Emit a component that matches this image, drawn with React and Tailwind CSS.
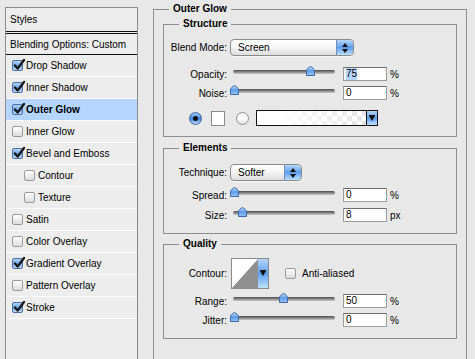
const layers = [
  { label: "Drop Shadow", on: true },
  { label: "Inner Shadow", on: true },
  { label: "Outer Glow", on: true, active: true },
  { label: "Inner Glow" },
  { label: "Bevel and Emboss", on: true },
  { label: "Contour", sub: true },
  { label: "Texture", sub: true },
  { label: "Satin" },
  { label: "Color Overlay" },
  { label: "Gradient Overlay", on: true },
  { label: "Pattern Overlay" },
  { label: "Stroke", on: true },
];

function Checkbox({ on }) {
  if (!on) {
    return (
      <div className="w-[11px] h-[11px] shrink-0 rounded-[2px] border border-[#9a9a9a] bg-gradient-to-b from-[#ffffff] to-[#dcdcdc]" />
    );
  }
  return (
    <div className="relative w-[11px] h-[11px] shrink-0 rounded-[2px] border border-[#4a6fa3] bg-gradient-to-b from-[#b4d4f7] via-[#6aa6ec] to-[#bcdcfb]">
      <svg className="absolute -left-[1px] -top-[3px]" width="14" height="14" viewBox="0 0 14 14">
        <path d="M3 7.5 L5.6 10.6 L12 2" stroke="#161616" strokeWidth="2.3" fill="none" strokeLinecap="round" strokeLinejoin="round" />
      </svg>
    </div>
  );
}

function Radio({ on }) {
  if (on) {
    return (
      <div className="w-[13px] h-[13px] shrink-0 rounded-full border border-[#3f679e] bg-gradient-to-b from-[#9cc6f4] via-[#3f87de] to-[#b2d7fb] flex items-center justify-center">
        <div className="w-[5px] h-[5px] rounded-full bg-[#111]" />
      </div>
    );
  }
  return (
    <div className="w-[13px] h-[13px] shrink-0 rounded-full border border-[#8f8f8f] bg-gradient-to-b from-[#f4f4f4] via-[#ffffff] to-[#dedede]" />
  );
}

function Stepper() {
  return (
    <div className="w-[17px] h-full ml-auto shrink-0 rounded-r-[4px] border-l border-[#6f8fb8] bg-gradient-to-b from-[#b7d6f8] via-[#5c9ded] to-[#bfe0fc] flex flex-col items-center justify-center gap-[2px]">
      <svg width="6" height="4" viewBox="0 0 6 4"><path d="M3 0 L6 4 H0 Z" fill="#111" /></svg>
      <svg width="6" height="4" viewBox="0 0 6 4"><path d="M0 0 H6 L3 4 Z" fill="#111" /></svg>
    </div>
  );
}

function Select({ value, width }) {
  return (
    <div className={`${width} h-full flex items-stretch rounded-[4px] border border-[#8a8a8a] bg-gradient-to-b from-[#ffffff] via-[#f4f4f4] to-[#dddddd] shadow-[0_1px_0_#f6f6f6]`}>
      <span className="pl-[7px] flex items-center">{value}</span>
      <Stepper />
    </div>
  );
}

function DropArrow() {
  return (
    <div className="w-[10px] h-full shrink-0 bg-gradient-to-b from-[#b7d6f8] via-[#5c9ded] to-[#bfe0fc] flex items-center justify-center">
      <svg width="6" height="7" viewBox="0 0 6 7"><path d="M0 0 H6 V1 L3 6 L0 1 Z" fill="#111" /></svg>
    </div>
  );
}

function Slider({ pos }) {
  return (
    <div className="relative w-[108px] h-full px-[3px] pt-[3px] shrink-0">
      <div className="h-[4px] rounded-full bg-gradient-to-b from-[#4a4a4a] via-[#8a8a8a] to-[#c8c8c8]" />
      <svg className="absolute -top-[1px]" style={{ left: pos }} width="9" height="10" viewBox="0 0 9 10">
        <defs>
          <linearGradient id="thumb" x1="0" y1="0" x2="0" y2="1">
            <stop offset="0" stopColor="#cfe4fb" />
            <stop offset="0.5" stopColor="#5b9be8" />
            <stop offset="1" stopColor="#9cc8f6" />
          </linearGradient>
        </defs>
        <path d="M4.5 0.5 C6.5 1.5 8.5 3 8.5 5 V9.5 H0.5 V5 C0.5 3 2.5 1.5 4.5 0.5 Z" fill="url(#thumb)" stroke="#3d6aa6" strokeWidth="1" />
      </svg>
    </div>
  );
}

function Field({ value, selected }) {
  return (
    <div className="ml-[5px] w-[44px] h-[14px] shrink-0 border border-[#9c9c9c] border-t-[#6e6e6e] bg-white pl-[2px] flex items-center leading-[12px]">
      <span className={selected ? "bg-[#b5d5ff]" : ""}>{value}</span>
    </div>
  );
}

function Row({ label, className, children }) {
  return (
    <div className={`flex items-center ${className}`}>
      <span className="w-[63px] shrink-0 text-right">{label}</span>
      <div className="ml-[3px] h-full flex items-center">{children}</div>
    </div>
  );
}

function SliderRow({ label, pos, value, unit, selected, className }) {
  return (
    <Row label={label} className={`h-[14px] ${className}`}>
      <Slider pos={pos} />
      <Field value={value} selected={selected} />
      <span className="ml-[3px]">{unit}</span>
    </Row>
  );
}

function Group({ title, className, children }) {
  return (
    <fieldset className={`w-full border border-[#8e8e8e] ${className}`}>
      <legend className="ml-[15px] px-[4px] font-bold leading-[12px]">{title}</legend>
      {children}
    </fieldset>
  );
}

export default function App() {
  return (
    <div className="w-[475px] h-[359px] overflow-hidden bg-[#e8e8e8] flex items-start font-['Liberation_Sans',Arial,sans-serif] text-[10px] text-black">
      <div className="ml-[5px] mt-[7px] w-[133px] h-[370px] shrink-0 border border-[#8a8a8a] bg-[#ededed]">
        <div className="h-[26px] pl-[4px] flex items-center border-b-[3px] border-double border-[#111]">Styles</div>
        <div className="h-[21px] pl-[4px] flex items-center border-b border-[#111]">Blending Options: Custom</div>
        {layers.map((l) => (
          <div
            key={l.label}
            className={`h-[22px] flex items-center border-b border-[#fbfbfb] ${l.sub ? "pl-[18px]" : "pl-[6px]"} ${l.active ? "bg-[#b5d5ff] font-bold" : ""}`}
          >
            <Checkbox on={l.on} />
            <span className="ml-[3px]">{l.label}</span>
          </div>
        ))}
      </div>

      <fieldset className="ml-[15px] mt-[3px] w-[314px] h-[380px] shrink-0 border border-[#8e8e8e] px-[9px] pt-[3px]">
        <legend className="ml-[6px] px-[4px] font-bold leading-[12px]">Outer Glow</legend>

        <Group title="Structure" className="pb-[10px]">
          <Row label="Blend Mode:" className="mt-[9px] h-[17px]">
            <Select value="Screen" width="w-[124px]" />
          </Row>
          <SliderRow label="Opacity:" pos={76} value="75" unit="%" selected className="mt-[11px]" />
          <SliderRow label="Noise:" pos={0} value="0" unit="%" className="mt-[5px]" />
          <div className="mt-[10px] h-[16px] pl-[25px] flex items-center">
            <Radio on />
            <div className="ml-[9px] w-[14px] h-[15px] border border-[#8a8a8a] bg-white" />
            <div className="ml-[11px]"><Radio /></div>
            <div className="ml-[7px] w-[122px] h-[16px] flex border border-[#111] bg-[linear-gradient(to_right,#ffffff_15%,rgba(255,255,255,0)_90%),repeating-conic-gradient(#e4e4e4_0%_25%,#ffffff_0%_50%)] bg-[length:100%_100%,10px_10px]">
              <div className="ml-auto h-full border-l border-[#111]"><DropArrow /></div>
            </div>
          </div>
        </Group>

        <Group title="Elements" className="mt-[5px] pb-[11px]">
          <Row label="Technique:" className="mt-[10px] h-[17px]">
            <Select value="Softer" width="w-[72px]" />
          </Row>
          <SliderRow label="Spread:" pos={0} value="0" unit="%" className="mt-[7px]" />
          <SliderRow label="Size:" pos={8} value="8" unit="px" className="mt-[6px]" />
        </Group>

        <Group title="Quality" className="mt-[4px] pb-[11px]">
          <div className="mt-[8px] h-[31px] flex items-center">
            <span className="w-[63px] shrink-0 text-right">Contour:</span>
            <div className="ml-[4px] w-[38px] h-[31px] flex border border-[#8a8a8a] bg-white">
              <svg className="flex-1 h-full" viewBox="0 0 28 29" preserveAspectRatio="none">
                <path d="M0 29 L28 0 V29 Z" fill="#8f8f8f" />
              </svg>
              <DropArrow />
            </div>
            <div className="ml-[16px]"><Checkbox /></div>
            <span className="ml-[6px]">Anti-aliased</span>
          </div>
          <SliderRow label="Range:" pos={49} value="50" unit="%" className="mt-[5px]" />
          <SliderRow label="Jitter:" pos={0} value="0" unit="%" className="mt-[5px]" />
        </Group>
      </fieldset>
    </div>
  );
}
